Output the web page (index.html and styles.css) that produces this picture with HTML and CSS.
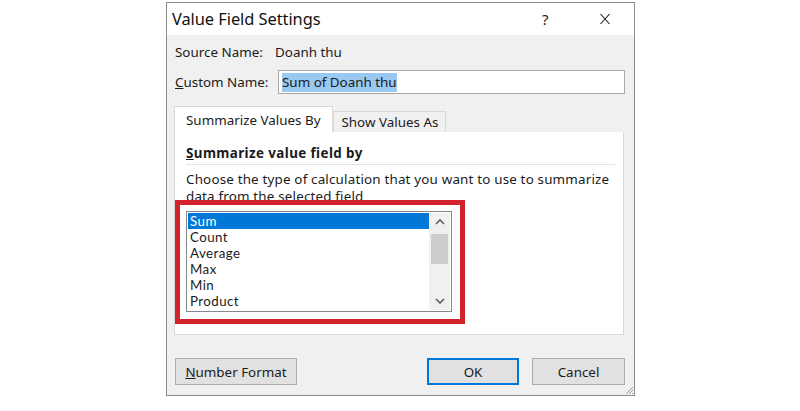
FILE: index.html
```html
<!DOCTYPE html>
<html>
<head>
<meta charset="utf-8">
<link rel="stylesheet" href="styles.css">
</head>
<body>
<div class="dialog">
  <div class="titlebar">
    <span class="title">Value Field Settings</span>
    <span class="help">?</span>
    <svg class="close" width="12" height="12" viewBox="0 0 12 12"><path d="M1.5 1 L10.5 11 M10.5 1 L1.5 11" stroke="#1a1a1a" stroke-width="1.1" fill="none"/></svg>
  </div>
  <div class="body">
    <div class="row source">
      <span class="label">Source Name:</span>
      <span class="value">Doanh thu</span>
    </div>
    <div class="row custom">
      <span class="label"><u>C</u>ustom Name:</span>
      <div class="input"><span class="sel">Sum of Doanh thu</span></div>
    </div>
    <div class="tabs">
      <div class="tab active">Summarize Values By</div>
      <div class="tab">Show Values As</div>
    </div>
    <div class="panel">
      <div class="heading"><u>S</u>ummarize value field by</div>
      <p class="desc">Choose the type of calculation that you want to use to summarize data from the selected field</p>
      <div class="listbox">
        <ul class="items">
          <li class="selected">Sum</li>
          <li>Count</li>
          <li>Average</li>
          <li>Max</li>
          <li>Min</li>
          <li>Product</li>
        </ul>
        <div class="scrollbar">
          <svg class="arrow" width="10" height="6" viewBox="0 0 10 6"><path d="M1 5 L5 1 L9 5" stroke="#606060" stroke-width="1.6" fill="none"/></svg>
          <div class="thumb"></div>
          <div class="spacer"></div>
          <svg class="arrow" width="10" height="6" viewBox="0 0 10 6"><path d="M1 1 L5 5 L9 1" stroke="#606060" stroke-width="1.6" fill="none"/></svg>
        </div>
      </div>
      <div class="highlight"></div>
    </div>
    <div class="buttons">
      <button class="btn numfmt"><u>N</u>umber Format</button>
      <div class="grow"></div>
      <button class="btn ok">OK</button>
      <button class="btn cancel">Cancel</button>
    </div>
    <svg class="grip" width="10" height="10" viewBox="0 0 10 10"><path d="M9 2 L2 9 M9 5 L5 9 M9 8 L8 9" stroke="#9a9a9a" stroke-width="1" fill="none"/></svg>
  </div>
</div>
</body>
</html>
```
FILE: styles.css
```css
html, body {
  margin: 0;
  padding: 0;
  background: #ffffff;
}
body {
  font-family: "Noto Sans", "Open Sans", sans-serif;
  color: #1b1b1b;
  width: 800px;
  height: 411px;
  overflow: hidden;
}
.dialog {
  margin-top: 2px;
  margin-left: 166px;
  width: 469px;
  height: 394px;
  box-sizing: border-box;
  border: 1px solid #8c8c8c;
  display: flex;
  flex-direction: column;
}
.titlebar {
  height: 32px;
  flex: none;
  background: #ffffff;
  display: flex;
  align-items: center;
  padding-left: 5px;
}
.title {
  font-size: 16.4px;
  color: #111;
  flex: 1;
  letter-spacing: -0.05px;
  margin-top: -1px;
}
.help {
  font-size: 15px;
  width: 12px;
  margin-right: 45px;
  color: #222;
}
.close {
  margin-right: 23px;
}
.body {
  flex: 1;
  background: #f0f0f0;
  position: relative;
  padding: 0 9px 0 7px;
  display: flex;
  flex-direction: column;
  font-size: 13.4px;
}
.row {
  display: flex;
  align-items: center;
}
.source {
  margin-top: 7px;
  height: 20px;
  padding-left: 1px;
}
.source .label {
  width: 100px;
}
.custom {
  margin-top: 8px;
  height: 24px;
  padding-left: 1px;
}
.custom .label {
  width: 103px;
}
.input {
  flex: 1;
  height: 24px;
  box-sizing: border-box;
  border: 1px solid #a9a9a9;
  background: #fff;
  display: flex;
  align-items: center;
  padding-left: 3px;
}
.sel {
  background: #99c8f0;
  padding: 1px 0;
  line-height: 17px;
}
.tabs {
  margin-top: 12px;
  display: flex;
  align-items: flex-end;
  height: 26px;
}
.tab {
  box-sizing: border-box;
  height: 21px;
  padding: 0 7px;
  border: 1px solid #d9d9d9;
  border-bottom: none;
  background: #f0f0f0;
  display: flex;
  align-items: center;
}
.tab.active {
  height: 26px;
  background: #fff;
  padding: 0 12px 0 11px;
  border-right: 1px solid #d9d9d9;
}
.panel {
  position: relative;
  height: 203px;
  box-sizing: border-box;
  background: #fff;
  border: 1px solid #d9d9d9;
  border-top: none;
  padding: 12px 8px 0 11px;
  margin-right: 1px;
}
.heading {
  font-weight: bold;
  line-height: 18px;
  padding-bottom: 2px;
  border-bottom: 1px solid #e3e3e3;
  letter-spacing: 0.4px;
}
.desc {
  margin: 6px 0 0 0;
  line-height: 17px;
  letter-spacing: 0.18px;
}
.listbox {
  margin-top: 6px;
  width: 266px;
  height: 101px;
  box-sizing: border-box;
  border: 1px solid #82878f;
  display: flex;
  padding: 1px;
  background: #fff;
}
.items {
  list-style: none;
  margin: 0;
  padding: 0;
  flex: 1;
  font-family: "Lato", "Noto Sans", sans-serif;
  font-size: 13.3px;
  letter-spacing: 0.45px;
}
.items li {
  height: 16px;
  line-height: 16px;
  padding-left: 2px;
}
.items li.selected {
  background: #0078d7;
  color: #fff;
}
.scrollbar {
  width: 21px;
  background: #f0f0f0;
  display: flex;
  flex-direction: column;
  align-items: center;
}
.arrow {
  margin: 6px 0;
}
.thumb {
  width: 17px;
  height: 30px;
  background: #cdcdcd;
  margin-top: 3px;
}
.spacer {
  flex: 1;
}
.highlight {
  position: absolute;
  left: 0;
  top: 68px;
  width: 290px;
  height: 124px;
  box-sizing: border-box;
  border: 5px solid #d2232c;
}
.buttons {
  margin-top: 23px;
  display: flex;
  padding-left: 1px;
}
.grow {
  flex: 1;
}
.btn {
  font-family: inherit;
  font-size: 13.4px;
  color: #1b1b1b;
  height: 27px;
  box-sizing: border-box;
  background: #e1e1e1;
  border: 1px solid #adadad;
  padding: 0;
  margin: 0;
}
.numfmt {
  width: 122px;
}
.ok {
  width: 92px;
  border: 2px solid #0078d7;
  margin-right: 13px;
}
.cancel {
  width: 93px;
}
.grip {
  position: absolute;
  right: 0;
  bottom: 0;
}
```
